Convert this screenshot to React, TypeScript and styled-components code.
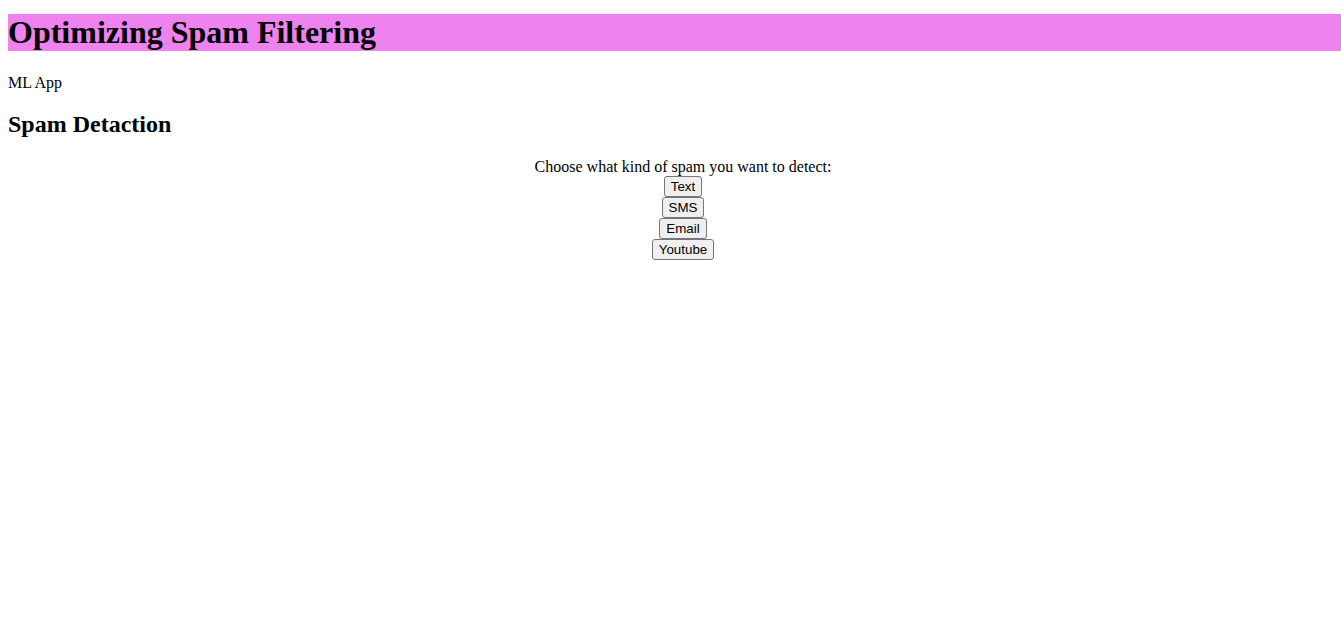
import React from "react";
import styled, { createGlobalStyle } from "styled-components";

const GlobalStyle = createGlobalStyle`
  body {
    margin: 8px 0 8px 8px;
    font-family: "Liberation Serif", "Times New Roman", serif;
    font-size: 16px;
    color: #000;
    background: #fff;
  }
`;

const Page = styled.div`
  padding-top: 6px;
`;

const Header = styled.h1`
  margin: 0 0 22.5px;
  background: violet;
  font-size: 32px;
  font-weight: bold;
`;

const Subtitle = styled.p`
  margin: 16px 0;
`;

const SectionTitle = styled.h2`
  margin: 19.92px 0;
  font-size: 24px;
  font-weight: bold;
`;

const Chooser = styled.div`
  display: flex;
  flex-direction: column;
  align-items: center;
  padding-left: 17px;
`;

const Prompt = styled.div`
  line-height: normal;
`;

const TypeButton = styled.button`
  font-family: "Liberation Sans", Arial, sans-serif;
  font-size: 13.333px;
  line-height: 15px;
  padding: 2px 6px;
  border: 1px solid #767676;
  border-radius: 3px;
  background: #efefef;
  color: #000;
  cursor: pointer;
`;

const spamTypes = ["Text", "SMS", "Email", "Youtube"];

const App = () => {
  return (
    <Page>
      <GlobalStyle />
      <Header>Optimizing Spam Filtering</Header>
      <Subtitle>ML App</Subtitle>
      <SectionTitle>Spam Detaction</SectionTitle>
      <Chooser>
        <Prompt>Choose what kind of spam you want to detect:</Prompt>
        {spamTypes.map((t) => (
          <TypeButton key={t}>{t}</TypeButton>
        ))}
      </Chooser>
    </Page>
  );
};

export default App;
